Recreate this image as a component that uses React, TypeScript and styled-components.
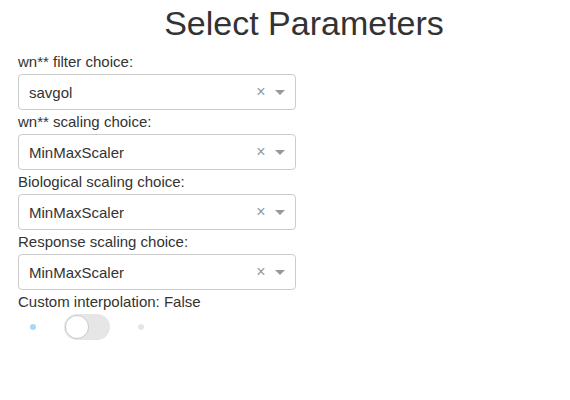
import React from "react";
import styled, { createGlobalStyle } from "styled-components";

const GlobalStyle = createGlobalStyle`
  body {
    margin: 0;
    background: #fff;
    font-family: "Liberation Sans", Arial, sans-serif;
    font-size: 15px;
    color: #333;
  }
`;

const Page = styled.div`
  padding: 0 18px;
`;

const Title = styled.h1`
  margin: 5px 0 10px;
  padding-left: 38px;
  text-align: center;
  font-size: 34px;
  font-weight: 500;
  line-height: 1.1;
  color: #333;
`;

const Field = styled.div`
  display: flex;
  flex-direction: column;
  width: 278px;
`;

const Label = styled.label`
  line-height: 20px;
  margin-bottom: 2px;
`;

const SelectBox = styled.div`
  display: flex;
  align-items: center;
  height: 34px;
  border: 1px solid #ccc;
  border-radius: 4px;
  background: #fff;
  margin-bottom: 2px;
`;

const Value = styled.span`
  flex: 1;
  padding-left: 10px;
  color: #333;
`;

const Clear = styled.span`
  width: 12px;
  text-align: center;
  color: #999;
  font-size: 16px;
  line-height: 1;
`;

const ArrowZone = styled.span`
  width: 25px;
  padding-right: 3px;
  display: flex;
  justify-content: center;
`;

const Arrow = styled.span`
  border-color: #999 transparent transparent;
  border-style: solid;
  border-width: 5px 5px 2.5px;
  width: 0;
  height: 0;
  margin-top: 3px;
`;

const ToggleRow = styled.div`
  display: flex;
  align-items: center;
  height: 28px;
  margin-top: 1px;
  padding-left: 12px;
`;

const Dot = styled.span<{ active?: boolean }>`
  width: 6px;
  height: 6px;
  border-radius: 50%;
  background: ${({ active }) => (active ? "#a8d8f8" : "#e6e6e6")};
`;

const Track = styled.span`
  position: relative;
  width: 46px;
  height: 26px;
  margin: 0 28px 0 28px;
  border-radius: 13px;
  background: #e6e6e6;
`;

const Knob = styled.span`
  position: absolute;
  left: 1px;
  top: 1px;
  width: 22px;
  height: 22px;
  border-radius: 50%;
  background: #fff;
  border: 1px solid #c8c8c8;
`;

const fields = [
  { label: "wn** filter choice:", value: "savgol" },
  { label: "wn** scaling choice:", value: "MinMaxScaler" },
  { label: "Biological scaling choice:", value: "MinMaxScaler" },
  { label: "Response scaling choice:", value: "MinMaxScaler" },
];

export default function App() {
  return (
    <>
      <GlobalStyle />
      <Page>
        <Title>Select Parameters</Title>
        {fields.map((f) => (
          <Field key={f.label}>
            <Label>{f.label}</Label>
            <SelectBox>
              <Value>{f.value}</Value>
              <Clear>×</Clear>
              <ArrowZone>
                <Arrow />
              </ArrowZone>
            </SelectBox>
          </Field>
        ))}
        <Label>Custom interpolation: False</Label>
        <ToggleRow>
          <Dot active />
          <Track>
            <Knob />
          </Track>
          <Dot />
        </ToggleRow>
      </Page>
    </>
  );
}
